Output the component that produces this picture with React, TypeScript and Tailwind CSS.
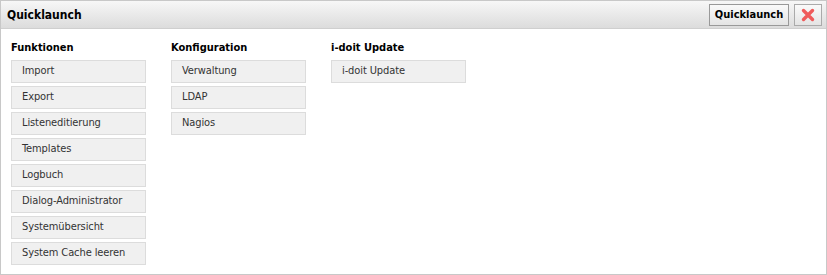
import React from "react";

const columns = [
  {
    title: "Funktionen",
    items: [
      "Import",
      "Export",
      "Listeneditierung",
      "Templates",
      "Logbuch",
      "Dialog-Administrator",
      "Systemübersicht",
      "System Cache leeren",
    ],
  },
  { title: "Konfiguration", items: ["Verwaltung", "LDAP", "Nagios"] },
  { title: "i-doit Update", items: ["i-doit Update"] },
];

export default function App() {
  return (
    <div
      className="w-[827px] h-[275px] bg-white text-black"
      style={{ fontFamily: '"DejaVu Sans Condensed", "DejaVu Sans", sans-serif' }}
    >
      <div className="flex flex-col h-full border border-[#c8c8c8]">
        <div className="flex items-center justify-between h-[28px] pl-[6px] pr-[4px] border-b border-[#cfcfcf] bg-gradient-to-b from-[#f7f7f7] to-[#dcdcdc]">
          <span className="text-[12px] font-bold">Quicklaunch</span>
          <div className="flex items-center gap-[5px]">
            <button className="h-[22px] w-[80px] border border-[#999] bg-gradient-to-b from-[#fafafa] to-[#e4e4e4] text-[11px] font-bold leading-none">
              Quicklaunch
            </button>
            <button className="flex items-center justify-center w-[28px] h-[22px] border border-[#aaa] bg-gradient-to-b from-[#fafafa] to-[#e4e4e4]">
              <svg width="14" height="14" viewBox="0 0 14 14">
                <path
                  d="M2.5 2.5 L11.5 11.5 M11.5 2.5 L2.5 11.5"
                  stroke="#ef5a5a"
                  strokeWidth="3.4"
                  strokeLinecap="round"
                />
              </svg>
            </button>
          </div>
        </div>
        <div className="flex gap-[25px] pl-[10px] pt-[11px]">
          {columns.map((col) => (
            <div key={col.title} className="flex flex-col w-[135px]">
              <div className="text-[11px] font-bold h-[15px] leading-[15px] mb-[5px]">
                {col.title}
              </div>
              <div className="flex flex-col gap-[3px]">
                {col.items.map((item) => (
                  <div
                    key={item}
                    className="h-[23px] flex items-center pl-[10px] border border-[#dcdcdc] bg-[#f0f0f0] text-[11px] text-[#333] tracking-[-0.1px]"
                  >
                    {item}
                  </div>
                ))}
              </div>
            </div>
          ))}
        </div>
      </div>
    </div>
  );
}
